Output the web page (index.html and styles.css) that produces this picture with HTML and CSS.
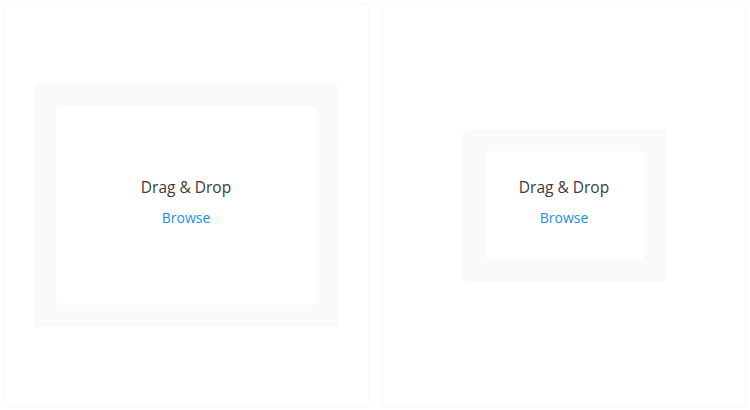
FILE: index.html
```html
<!DOCTYPE html>
<html>
<head>
<meta charset="utf-8">
<link rel="stylesheet" href="styles.css">
</head>
<body>
<div class="row">
  <div class="panel">
    <div class="drop drop-lg">
      <div class="inner">
        <div class="title">Drag &amp; Drop</div>
        <a class="browse">Browse</a>
      </div>
    </div>
  </div>
  <div class="panel">
    <div class="drop drop-sm">
      <div class="inner">
        <div class="title">Drag &amp; Drop</div>
        <a class="browse">Browse</a>
      </div>
    </div>
  </div>
</div>
</body>
</html>
```
FILE: styles.css
```css
html, body {
  margin: 0;
  padding: 0;
  background: #fff;
}
body {
  font-family: "Open Sans", Lato, sans-serif;
}
.row {
  display: flex;
  gap: 14px;
  padding: 4px;
}
.panel {
  width: 364px;
  height: 402px;
  box-sizing: border-box;
  border-radius: 3px;
  box-shadow: 0 0 2px rgba(0, 0, 0, 0.1);
  display: flex;
  align-items: center;
  justify-content: center;
}
.drop {
  background: #f9fafc;
  border-radius: 4px;
  padding: 22px;
  box-sizing: border-box;
  display: flex;
}
.drop-lg {
  width: 304px;
  height: 243px;
}
.drop-sm {
  width: 203px;
  height: 153px;
}
.inner {
  flex: 1;
  background: #fff;
  border-radius: 4px;
  box-shadow: 0 0 1px rgba(0, 0, 0, 0.08);
  display: flex;
  flex-direction: column;
  align-items: center;
  justify-content: center;
  padding-bottom: 6px;
}
.title {
  font-size: 15.5px;
  color: #3a3a3a;
  line-height: 18px;
}
.browse {
  margin-top: 13px;
  font-size: 14px;
  line-height: 17px;
  color: #1a8fe8;
  cursor: pointer;
}
```
